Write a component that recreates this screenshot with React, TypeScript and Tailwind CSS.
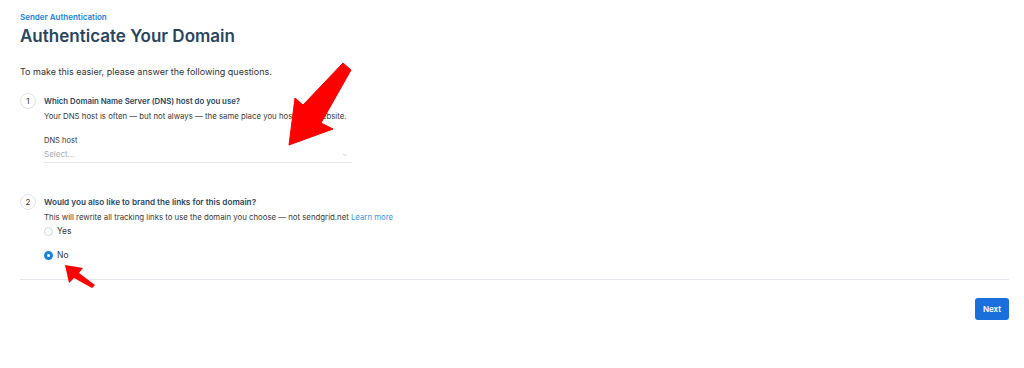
import { ChevronDown } from "lucide-react";

function StepNumber({ n }: { n: number }) {
  return (
    <div className="flex h-4 w-4 shrink-0 items-center justify-center rounded-full border border-[#dfe3e8] text-[8px] text-[#333]">
      {n}
    </div>
  );
}

function Radio({ label, checked }: { label: string; checked?: boolean }) {
  return (
    <label className="flex h-3 items-center gap-[4px] text-[8.5px] leading-3 text-[#3a3a3a]">
      {checked ? (
        <span className="h-[9px] w-[9px] rounded-full border-[3px] border-[#1a82e2] bg-white" />
      ) : (
        <span className="h-[9px] w-[9px] rounded-full border border-[#cfd6dd] bg-white" />
      )}
      {label}
    </label>
  );
}

export default function App() {
  return (
    <div className="relative h-[368px] w-[1024px] overflow-hidden bg-white font-['Inter',sans-serif]">
      <div className="pl-5 pr-[15px] pt-3">
        <p className="text-[8px] font-semibold leading-[10px] text-[#1a82e2]">Sender Authentication</p>
        <h1 className="mt-[3px] text-[17px] font-semibold leading-[22px] text-[#294661]">
          Authenticate Your Domain
        </h1>
        <p className="mt-[19px] text-[9px] leading-3 text-[#333]">
          To make this easier, please answer the following questions.
        </p>

        <div className="mt-[15px] flex gap-2">
          <StepNumber n={1} />
          <div className="pt-[2px]">
            <p className="text-[7.8px] font-semibold leading-3 text-[#294661]">
              Which Domain Name Server (DNS) host do you use?
            </p>
            <p className="mt-[3px] text-[7.8px] leading-3 text-[#3a3a3a]">
              Your DNS host is often — but not always — the same place you host your website.
            </p>
            <p className="mt-[14px] text-[7.5px] leading-[10px] text-[#333]">DNS host</p>
            <div className="mt-[2px] flex h-[15px] w-[308px] items-start justify-between border-b border-[#e3e7eb]">
              <span className="text-[8px] leading-3 text-[#a3adb8]">Select...</span>
              <ChevronDown className="mr-[4px] mt-[4px] h-[6px] w-[6px] text-[#9aa5b1]" strokeWidth={2} />
            </div>
          </div>
        </div>

        <div className="mt-[31px] flex gap-2">
          <StepNumber n={2} />
          <div className="pt-[2px]">
            <p className="text-[8.2px] font-semibold leading-3 text-[#294661]">
              Would you also like to brand the links for this domain?
            </p>
            <p className="mt-[3px] text-[7.8px] leading-3 text-[#3a3a3a]">
              This will rewrite all tracking links to use the domain you choose — not sendgrid.net{" "}
              <span className="text-[#3b94e6]">Learn more</span>
            </p>
            <div className="mt-[2px]">
              <Radio label="Yes" />
            </div>
            <div className="mt-[12px]">
              <Radio label="No" checked />
            </div>
          </div>
        </div>

        <div className="mt-[18px] border-t border-[#e3e7eb]" />

        <div className="mt-[18px] flex justify-end">
          <button className="h-[22px] w-[34px] rounded-[3px] bg-[#1a6fdc] text-[8px] font-semibold text-white">
            Next
          </button>
        </div>
      </div>

      <svg className="pointer-events-none absolute inset-0" width="1024" height="368" viewBox="0 0 1024 368">
        <polygon
          points="343,63 351,70 321,123 333,129 289,145 295,98 303,105"
          fill="#ff0000"
          stroke="#ff0000"
          strokeWidth="1"
          strokeLinejoin="round"
        />
        <polygon
          points="65,265 83,268 79,273 95,285 92,288 74,278 69,283"
          fill="#ff0000"
          strokeLinejoin="round"
        />
      </svg>
    </div>
  );
}
